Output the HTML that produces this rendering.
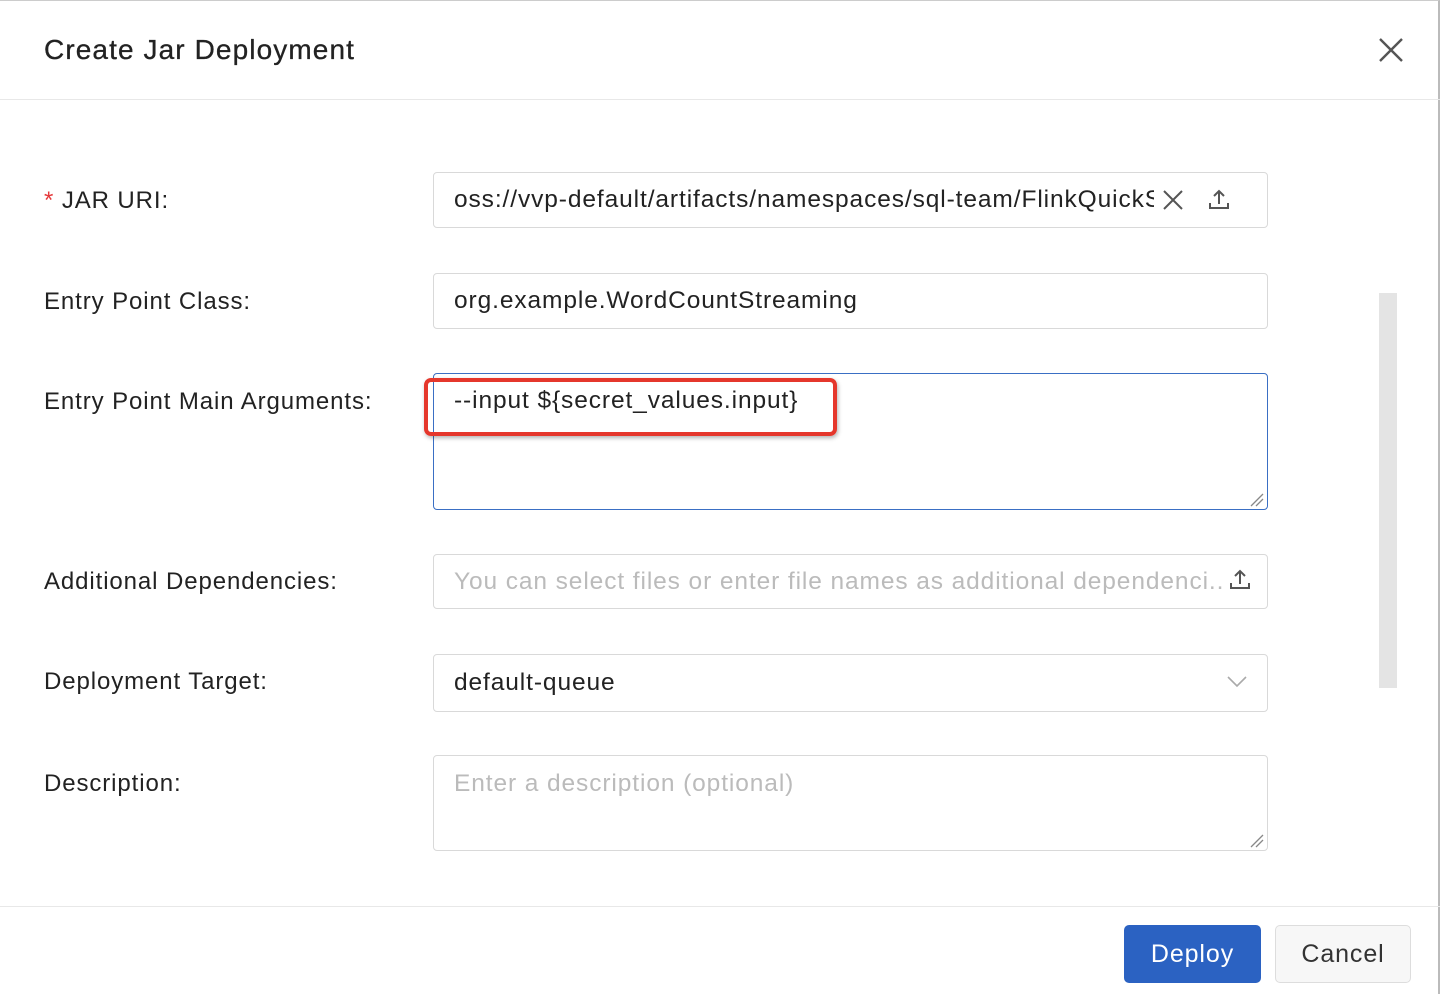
<!DOCTYPE html>
<html><head><style>
*{box-sizing:border-box;margin:0;padding:0}
body{width:1442px;height:994px;background:#fff;font-family:"Liberation Sans",sans-serif;color:#222;position:relative;overflow:hidden;letter-spacing:0.9px}
.abs{position:absolute}
.frame{left:0;top:0;width:1440px;height:994px;border-top:1px solid #ccc;border-right:2px solid #bbb}
.lbl{left:44px;font-size:24px;color:#222;line-height:30px}
.inp{left:433px;width:835px;border:1px solid #d9d9d9;border-radius:4px;background:#fff;font-size:24.5px;padding-left:20px;line-height:30px}
.ph{color:#bbb}
</style></head><body>
<div class="abs frame"></div>
<div class="abs" style="left:44px;top:34px;font-size:28px;line-height:32px;color:#222;letter-spacing:1.1px;-webkit-text-stroke:0.3px #222">Create Jar Deployment</div>
<svg class="abs" style="left:1378px;top:37px" width="26" height="26"><path d="M2 2L24 24M24 2L2 24" stroke="#555" stroke-width="2.4"/></svg>
<div class="abs" style="left:0;top:99px;width:1440px;height:1px;background:#e8e8e8"></div>

<div class="abs lbl" style="top:186px"><span style="color:#e5393b">*</span> JAR URI:</div>
<div class="abs inp" style="top:172px;height:56px;padding-top:12px;overflow:hidden;white-space:nowrap"><span style="display:inline-block;width:700px;overflow:hidden;vertical-align:top">oss://vvp-default/artifacts/namespaces/sql-team/FlinkQuickStart.jar</span></div>
<svg class="abs" style="left:1162px;top:189px" width="22" height="22"><path d="M2 2L20 20M20 2L2 20" stroke="#555" stroke-width="2"/></svg>
<svg class="abs" style="left:1207px;top:188px" width="24" height="24"><path d="M12 3V16M7 8L12 3L17 8M3 15V20H21V15" stroke="#555" stroke-width="2" fill="none"/></svg>

<div class="abs lbl" style="top:287px">Entry Point Class:</div>
<div class="abs inp" style="top:273px;height:56px;padding-top:12px">org.example.WordCountStreaming</div>

<div class="abs lbl" style="top:387px">Entry Point Main Arguments:</div>
<div class="abs inp" style="top:373px;height:137px;padding-top:12px;border-color:#3a6fc4">--input ${secret_values.input}</div>
<svg class="abs" style="left:1250px;top:493px" width="14" height="14"><path d="M1 13L13 1M6 13L13 6" stroke="#888" stroke-width="1.3"/></svg>
<div class="abs" style="left:424px;top:378px;width:413px;height:58px;border:4px solid #e5372c;border-radius:7px;box-shadow:1px 2px 4px rgba(0,0,0,.3)"></div>

<div class="abs lbl" style="top:567px">Additional Dependencies:</div>
<div class="abs inp ph" style="top:554px;height:55px;padding-top:12px;white-space:nowrap;overflow:hidden"><span style="display:inline-block;width:770px;overflow:hidden;vertical-align:top">You can select files or enter file names as additional dependenci...</span></div>
<svg class="abs" style="left:1228px;top:568px" width="24" height="24"><path d="M12 3V16M7 8L12 3L17 8M3 15V20H21V15" stroke="#555" stroke-width="2" fill="none"/></svg>

<div class="abs lbl" style="top:667px">Deployment Target:</div>
<div class="abs inp" style="top:654px;height:58px;padding-top:13px">default-queue</div>
<svg class="abs" style="left:1227px;top:675px" width="20" height="14"><path d="M1 2L10 11L19 2" stroke="#aaa" stroke-width="1.6" fill="none"/></svg>

<div class="abs lbl" style="top:769px">Description:</div>
<div class="abs inp ph" style="top:755px;height:96px;padding-top:13px">Enter a description (optional)</div>
<svg class="abs" style="left:1250px;top:834px" width="14" height="14"><path d="M1 13L13 1M6 13L13 6" stroke="#888" stroke-width="1.3"/></svg>

<div class="abs" style="left:1379px;top:293px;width:18px;height:395px;background:#e4e4e4"></div>

<div class="abs" style="left:0;top:906px;width:1440px;height:1px;background:#e8e8e8"></div>
<div class="abs" style="left:1124px;top:925px;width:137px;height:58px;background:#2b62c2;border-radius:5px;color:#fff;font-size:25px;text-align:center;line-height:58px">Deploy</div>
<div class="abs" style="left:1275px;top:925px;width:136px;height:58px;background:#f7f7f7;border:1px solid #ddd;border-radius:5px;color:#333;font-size:25px;text-align:center;line-height:56px">Cancel</div>
</body></html>
